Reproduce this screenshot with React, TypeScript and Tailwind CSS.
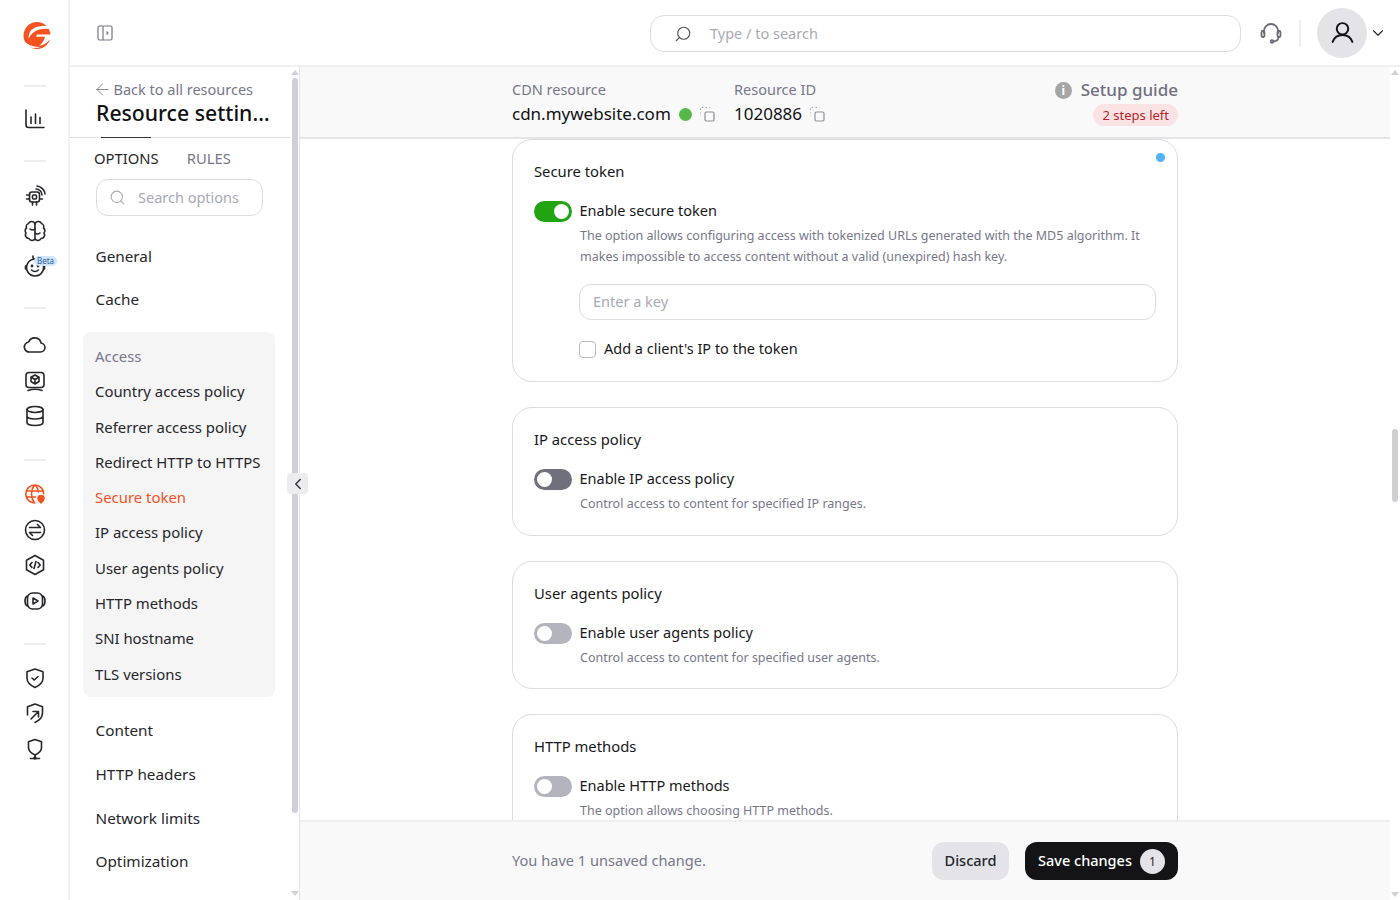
import React, { ReactNode } from "react";
import { ArrowLeft, ChevronDown, ChevronLeft, Search } from "lucide-react";

const accessItems = [
  "Country access policy",
  "Referrer access policy",
  "Redirect HTTP to HTTPS",
  "Secure token",
  "IP access policy",
  "User agents policy",
  "HTTP methods",
  "SNI hostname",
  "TLS versions",
];

function Ico({ children, className = "text-[#26262b]" }: { children: ReactNode; className?: string }) {
  return (
    <svg viewBox="0 0 24 24" fill="none" stroke="currentColor" strokeWidth="1.6" strokeLinecap="round" strokeLinejoin="round" className={`w-6 h-6 ${className}`}>
      {children}
    </svg>
  );
}

function RailItem({ children }: { children: ReactNode }) {
  return <div className="h-[35.4px] flex items-center justify-center">{children}</div>;
}

function Divider({ className = "" }: { className?: string }) {
  return <div className={`w-[22px] h-[2px] bg-[#eeeeee] ${className}`} />;
}

function Rail() {
  return (
    <div className="w-[70px] h-full shrink-0 border-r-2 border-[#f1f1f1] flex flex-col items-center pl-[2px]">
      <svg viewBox="0 0 40 40" className="w-[40px] h-[40px] mt-[16px] ml-[4px]">
        <circle cx="20" cy="19.500" r="13.500" fill="#f6521f" />
        <path d="M35 10.500 Q25 8.500 18 11.500 Q11 15 11.500 23 Q14.500 16 22 13.500 Q27 12.500 35 13 Z" fill="#fff" />
        <path d="M20 18.500 L35 18.500 L35 20.500 Q31 28 22 30 Q27 26 28 20.800 L19 20.800 Z" fill="#fff" />
        <path d="M6 24 Q12 31.500 24 31 Q15 33.500 9 30 Z" fill="#fff" />
      </svg>
      <Divider className="mt-[29px]" />
      <div className="mt-[14px]">
        <RailItem>
          <Ico>
            <path d="M3 3v15a2.500 2.500 0 0 0 2.500 2.500H21" />
            <path d="M8 10v6.500M12.500 7v9.500M17 10.500v6" />
          </Ico>
        </RailItem>
      </div>
      <Divider className="mt-[24px]" />
      <div className="mt-[16px] flex flex-col">
        <RailItem>
          <Ico>
            <rect x="6.500" y="8" width="10" height="10" rx="2.500" />
            <rect x="9.500" y="11" width="4" height="4" rx="1" />
            <path d="M3.500 11h3M3.500 15h3M9.500 18v3M13.500 18v3M16.500 15h3" />
            <path d="M13 5a6 6 0 0 1 6 6M14 2a9 9 0 0 1 8 8" />
          </Ico>
        </RailItem>
        <RailItem>
          <Ico>
            <path d="M12 5v15M12 5a3.500 3.500 0 0 0-6.500-.5A3.500 3.500 0 0 0 3.500 9a3.500 3.500 0 0 0-.5 5 3.500 3.500 0 0 0 3 5.500 3.500 3.500 0 0 0 6 .5" />
            <path d="M12 5a3.500 3.500 0 0 1 6.500-.5A3.500 3.500 0 0 1 20.500 9a3.500 3.500 0 0 1 .5 5 3.500 3.500 0 0 1-3 5.500 3.500 3.500 0 0 1-6 .5" />
            <path d="M7 10q2.500 2 5 0M12 14q2.500 2 5 0" />
          </Ico>
        </RailItem>
        <div className="relative">
          <RailItem>
            <Ico>
              <path d="M12 4a8.500 8.500 0 1 0 .1 0Z" />
              <path d="M12 4q-2.500-.5-2-3" />
              <circle cx="9" cy="11" r="0.600" />
              <circle cx="15" cy="11" r="0.600" />
              <path d="M8.500 15q3.500 3 7 0" />
              <path d="M3.500 11H2.500v3h1M20.500 11h1v3h-1" />
            </Ico>
          </RailItem>
          <span className="absolute left-[11px] top-[7px] h-[10px] px-[3px] rounded-full bg-[#cfe4fa] text-[#2a5d9c] text-[8px] leading-[10px]">Beta</span>
        </div>
      </div>
      <Divider className="mt-[22px]" />
      <div className="mt-[19px] flex flex-col">
        <RailItem>
          <Ico>
            <path d="M7 19h10.500a4.500 4.500 0 0 0 .6-8.950A6.500 6.500 0 0 0 5.700 9 5 5 0 0 0 7 19Z" />
          </Ico>
        </RailItem>
        <RailItem>
          <Ico>
            <rect x="3" y="3.500" width="18" height="15" rx="3" />
            <path d="M12 6l4 2.200v4.300L12 15l-4-2.500V8.200ZM12 10.500V15M8 8.200l4 2.300 4-2.300" />
            <path d="M5 21.500q7-2.500 14 0" />
          </Ico>
        </RailItem>
        <RailItem>
          <Ico>
            <ellipse cx="12" cy="5.500" rx="8" ry="3" />
            <path d="M4 5.500v13c0 1.700 3.600 3 8 3s8-1.300 8-3v-13M4 12c0 1.700 3.600 3 8 3s8-1.300 8-3" />
          </Ico>
        </RailItem>
      </div>
      <Divider className="mt-[25px]" />
      <div className="mt-[16px] flex flex-col">
        <RailItem>
          <Ico className="text-[#f6521f]">
            <path d="M20.800 12a9 9 0 1 0-9 9M3.500 9h17M3.500 15h9M11.500 3a15 15 0 0 0 0 18M12.500 3a15 15 0 0 1 3 7" />
            <path d="M18 13.500a3 3 0 0 1 3 3c0 2-3 4.500-3 4.500s-3-2.500-3-4.500a3 3 0 0 1 3-3Z" fill="currentColor" />
          </Ico>
        </RailItem>
        <RailItem>
          <Ico>
            <circle cx="12" cy="12" r="9.500" />
            <path d="M6.500 9.500h11l-3-3M17.500 14.500h-11l3 3" />
          </Ico>
        </RailItem>
        <RailItem>
          <Ico>
            <path d="M12 2.500l8.500 4.800v9.400L12 21.500l-8.500-4.800V7.300Z" />
            <path d="M9 9.500L6.800 12 9 14.500M15 9.500l2.200 2.500-2.200 2.500M13 8.500l-2 7" />
          </Ico>
        </RailItem>
        <RailItem>
          <Ico>
            <rect x="4.500" y="4" width="15" height="16" rx="5" />
            <path d="M4.500 7Q2 8 2 12t2.500 5M19.500 7Q22 8 22 12t-2.500 5" />
            <path d="M10 9l5 3-5 3Z" />
          </Ico>
        </RailItem>
      </div>
      <Divider className="mt-[25px]" />
      <div className="mt-[15px] flex flex-col">
        <RailItem>
          <Ico>
            <path d="M12 3l8 2.800v6.200c0 4.500-3.500 7.500-8 9.500-4.500-2-8-5-8-9.500V5.800Z" />
            <path d="M9 12l2.200 2 3.800-3.500" />
          </Ico>
        </RailItem>
        <RailItem>
          <Ico>
            <path d="M4.500 14V5.800L12 3l7.500 2.800V12c0 4.500-3.500 7.500-7.500 9.500" />
            <path d="M8 18l7-7M10 10.500h5.500V16" />
          </Ico>
        </RailItem>
        <RailItem>
          <Ico>
            <path d="M12 2.500l6.500 2.300v5.700c0 3.500-3 6-6.500 7.500-3.500-1.500-6.500-4-6.500-7.500V4.800Z" />
            <path d="M12 18v3M7.500 21.500h9" />
            <circle cx="12" cy="21" r="1" />
          </Ico>
        </RailItem>
      </div>
    </div>
  );
}

function NavRow({ label, className = "" }: { label: string; className?: string }) {
  return <div className={`pl-[25.5px] text-[15.3px] leading-[20px] text-[#26262b] ${className}`}>{label}</div>;
}

function Sidebar() {
  return (
    <div className="relative w-[230px] shrink-0 h-full border-r border-[#e4e4e7] flex">
      <div className="w-[220px] flex flex-col pt-[12px] overflow-hidden">
        <div className="pl-[22.5px] flex items-center gap-[2px] text-[14.5px] leading-[20px] text-[#77778a]">
          <ArrowLeft size={19} strokeWidth={1.1} />
          Back to all resources
        </div>
        <div className="pl-[26px] pr-[16px] -mt-[1px] text-[21.2px] leading-[30px] font-medium text-[#111114] truncate">Resource settings</div>
        <div className="relative mt-[9px] h-[1px] bg-[#dddde0]">
          <div className="absolute left-[31px] top-0 w-[50px] h-[1px] bg-[#33333a]" />
        </div>
        <div className="flex gap-[28px] pl-[24px] mt-[10px] text-[14.8px] leading-[20px]">
          <span className="text-[#26262b]">OPTIONS</span>
          <span className="text-[#77778a]">RULES</span>
        </div>
        <div className="mx-[26px] mt-[11px] w-[167px] h-[37px] rounded-[12px] border border-[#dcdce0] flex items-center pl-[12px] gap-[12px] text-[14.5px] text-[#a9a9b6]">
          <Search size={17} strokeWidth={1.5} />
          Search options
        </div>
        <NavRow label="General" className="mt-[30px]" />
        <NavRow label="Cache" className="mt-[23px]" />
        <div className="mx-[13px] mt-[23px] w-[192px] h-[365px] rounded-[8px] bg-[#f5f5f6] flex flex-col pt-[14px] gap-[15.300px]">
          <div className="pl-[12px] text-[14.9px] leading-[20px] text-[#77778a]">Access</div>
          {accessItems.map((item) => (
            <div key={item} className={`pl-[12px] text-[14.9px] leading-[20px] ${item === "Secure token" ? "text-[#f6521f]" : "text-[#26262b]"}`}>
              {item}
            </div>
          ))}
        </div>
        <NavRow label="Content" className="mt-[23px]" />
        <NavRow label="HTTP headers" className="mt-[24px]" />
        <NavRow label="Network limits" className="mt-[24px]" />
        <NavRow label="Optimization" className="mt-[23px]" />
      </div>
      <div className="w-[9px] flex flex-col items-center pt-[3px]">
        <div className="w-0 h-0 border-x-[4px] border-x-transparent border-b-[5px] border-b-[#d0d0d6]" />
        <div className="mt-[3px] w-[6px] h-[735px] rounded-full bg-[#cfcfd6]" />
        <div className="mt-[78px] w-0 h-0 border-x-[4px] border-x-transparent border-t-[5px] border-t-[#d0d0d6]" />
      </div>
      <div className="absolute right-[-9px] top-[406px] w-[21px] h-[21px] rounded-[4px] bg-[#ececef] flex items-center justify-center text-[#33333a]">
        <ChevronLeft size={18} strokeWidth={2} />
      </div>
    </div>
  );
}

function Header() {
  return (
    <div className="h-[67px] shrink-0 border-b-2 border-[#f0f0f0] flex items-center pl-[27px]">
      <svg viewBox="0 0 16 16" fill="none" stroke="#77778a" strokeWidth="1.200" className="w-[16px] h-[16px]">
        <rect x="1" y="1" width="14" height="14" rx="1.500" />
        <path d="M6 1v14M9.500 6.500L11 8l-1.500 1.500" />
      </svg>
      <div className="ml-[537px] mt-[1px] w-[591px] h-[37px] rounded-[14px] border border-[#dcdce0] flex items-center pl-[23px] pt-[1px] gap-[18px] text-[14.5px] text-[#a9a9b6]">
        <Search size={18} strokeWidth={1.5} className="text-[#55555f] -scale-x-100" />
        Type / to search
      </div>
      <svg viewBox="0 0 24 24" fill="none" stroke="#6b6b76" strokeWidth="1.800" strokeLinecap="round" className="ml-[18px] w-[24px] h-[24px]">
        <path d="M5 12V10a7 7 0 0 1 14 0v2" />
        <rect x="2.500" y="10" width="3" height="6" rx="1.200" />
        <rect x="18.500" y="10" width="3" height="6" rx="1.200" />
        <path d="M19.500 16q0 4-5 4.500" />
        <circle cx="13" cy="20.500" r="1.300" />
      </svg>
      <div className="ml-[16px] w-[2px] h-[26px] bg-[#eeeeee]" />
      <div className="ml-[16px] w-[50px] h-[50px] rounded-full bg-[#e4e4e8] flex items-center justify-center">
        <svg viewBox="0 0 24 24" fill="none" stroke="#141418" strokeWidth="1.900" strokeLinecap="round" className="w-[25px] h-[25px]">
          <circle cx="12" cy="8.500" r="5.500" />
          <path d="M2.500 21q2.500-6.500 9.500-6.500T21.500 21" />
        </svg>
      </div>
      <ChevronDown size={18} strokeWidth={1.5} className="ml-[2px] text-[#26262b]" />
    </div>
  );
}

function CopyIcon() {
  return (
    <svg viewBox="0 0 16 16" fill="none" className="w-[16px] h-[16px]">
      <rect x="6" y="6" width="9" height="9" rx="1.500" stroke="#8f8f99" strokeWidth="1.200" />
      <path d="M1.500 4V2.500a1 1 0 0 1 1-1H4M6.500 1.500H8M10 1.500h.5M1.500 6.500v1M1.500 9.500v.5" stroke="#a9a9b6" strokeWidth="1.200" strokeDasharray="1.500 1.500" />
    </svg>
  );
}

function InfoBar() {
  return (
    <div className="h-[72px] shrink-0 bg-[#f9f9f9] border-b-2 border-[#e5e5e7] flex justify-center">
      <div className="w-[666px] flex pt-[12px]">
        <div className="w-[222px]">
          <div className="text-[14.5px] leading-[20px] text-[#77778a]">CDN resource</div>
          <div className="mt-[3px] flex items-center text-[17px] leading-[24px] text-[#111114]">
            cdn.mywebsite.com
            <span className="ml-[8px] w-[13px] h-[13px] rounded-full bg-[#55b94a]" />
            <span className="ml-[7px]"><CopyIcon /></span>
          </div>
        </div>
        <div className="flex-1">
          <div className="text-[14.5px] leading-[20px] text-[#77778a]">Resource ID</div>
          <div className="mt-[3px] flex items-center text-[17px] leading-[24px] text-[#111114]">
            1020886
            <span className="ml-[7px]"><CopyIcon /></span>
          </div>
        </div>
        <div className="flex flex-col items-end">
          <div className="-mt-[1px] flex items-center gap-[9px] text-[17px] leading-[24px] font-medium text-[#6f6f7d]">
            <span className="w-[17px] h-[17px] rounded-full bg-[#a5a5a5] text-white text-[12px] leading-[17px] text-center font-bold">i</span>
            Setup guide
          </div>
          <span className="mt-[2px] h-[22px] px-[9px] rounded-full bg-[#fbe3e3] text-[#b4232a] text-[13px] leading-[22px]">2 steps left</span>
        </div>
      </div>
    </div>
  );
}

function Toggle({ on, dark }: { on?: boolean; dark?: boolean }) {
  return (
    <div className={`w-[37.5px] h-[21px] shrink-0 rounded-full p-[3px] flex ${on ? "bg-[#22a312] justify-end" : dark ? "bg-[#6f6f7d]" : "bg-[#b4b4be]"}`}>
      <div className="w-[15px] h-[15px] rounded-full bg-white" />
    </div>
  );
}

function OptionHead({ title, label, on, dark }: { title: string; label: string; on?: boolean; dark?: boolean }) {
  return (
    <>
      <div className="text-[14.8px] leading-[20px] text-[#17171b]">{title}</div>
      <div className="mt-[19px] flex items-center gap-[8px]">
        <Toggle on={on} dark={dark} />
        <span className="pb-[2px] text-[14.5px] leading-[20px] text-[#17171b]">{label}</span>
      </div>
    </>
  );
}

function Hint({ children }: { children: ReactNode }) {
  return <p className="pl-[46px] mt-[3px] text-[12.500px] leading-[21px] text-[#77778a]">{children}</p>;
}

function Card({ className = "", children }: { className?: string; children: ReactNode }) {
  return <div className={`relative shrink-0 w-[666px] rounded-[20px] border border-[#dcdce0] pl-[21px] pr-[21px] pt-[21px] ${className}`}>{children}</div>;
}

function Cards() {
  return (
    <div className="flex-1 min-h-0 overflow-hidden flex flex-col items-center gap-[25px]">
      <Card className="h-[243px]">
        <span className="absolute right-[12px] top-[13px] w-[9px] h-[9px] rounded-full bg-[#4db4f5]" />
        <OptionHead title="Secure token" label="Enable secure token" on />
        <Hint>
          The option allows configuring access with tokenized URLs generated with the MD5 algorithm. It makes impossible to access content without a valid (unexpired) hash key.
        </Hint>
        <div className="ml-[45px] mt-[17px] w-[577px] h-[36px] rounded-[12px] border border-[#dcdce0] flex items-center pl-[13px] text-[14.5px] text-[#a9a9b6]">Enter a key</div>
        <div className="ml-[45px] mt-[18px] flex items-center gap-[8px]">
          <div className="w-[17px] h-[17px] rounded-[4px] border border-[#b9b9c2]" />
          <span className="pb-[2px] text-[14.5px] leading-[20px] text-[#17171b]">Add a client's IP to the token</span>
        </div>
      </Card>
      <Card className="h-[129px]">
        <OptionHead title="IP access policy" label="Enable IP access policy" dark />
        <Hint>Control access to content for specified IP ranges.</Hint>
      </Card>
      <Card className="h-[128px]">
        <OptionHead title="User agents policy" label="Enable user agents policy" />
        <Hint>Control access to content for specified user agents.</Hint>
      </Card>
      <Card className="h-[129px]">
        <OptionHead title="HTTP methods" label="Enable HTTP methods" />
        <Hint>The option allows choosing HTTP methods.</Hint>
      </Card>
    </div>
  );
}

function Footer() {
  return (
    <div className="h-[80px] shrink-0 bg-[#f9f9f9] border-t-2 border-[#efefef] flex justify-center">
      <div className="w-[666px] flex items-center justify-between">
        <span className="text-[14.6px] text-[#77778a]">You have 1 unsaved change.</span>
        <div className="flex gap-[16px]">
          <button className="w-[77px] h-[38px] rounded-[12px] bg-[#e4e4e8] text-[14.5px] font-medium text-[#26262b]">Discard</button>
          <button className="w-[153px] h-[38px] rounded-[12px] bg-[#141416] text-[14.5px] font-medium text-white flex items-center justify-center gap-[8px]">
            Save changes
            <span className="w-[25px] h-[25px] rounded-full bg-[#e4e4e8] text-[#26262b] text-[12px] leading-[25px] font-normal">1</span>
          </button>
        </div>
      </div>
    </div>
  );
}

function PageScrollbar() {
  return (
    <div className="w-[10px] shrink-0 h-full flex flex-col items-center pt-[3px]">
      <div className="w-0 h-0 border-x-[4px] border-x-transparent border-b-[5px] border-b-[#d0d0d6]" />
      <div className="mt-[354px] w-[6px] h-[73px] rounded-full bg-[#cfcfd6]" />
      <div className="mt-auto mb-[3px] w-0 h-0 border-x-[4px] border-x-transparent border-t-[5px] border-t-[#d0d0d6]" />
    </div>
  );
}

export default function App() {
  return (
    <div className="w-[1400px] h-[900px] overflow-hidden flex bg-white font-['Noto_Sans',sans-serif]">
      <Rail />
      <div className="flex-1 min-w-0 flex flex-col">
        <Header />
        <div className="flex-1 min-h-0 flex">
          <Sidebar />
          <div className="flex-1 min-w-0 flex flex-col">
            <InfoBar />
            <Cards />
            <Footer />
          </div>
          <PageScrollbar />
        </div>
      </div>
    </div>
  );
}
